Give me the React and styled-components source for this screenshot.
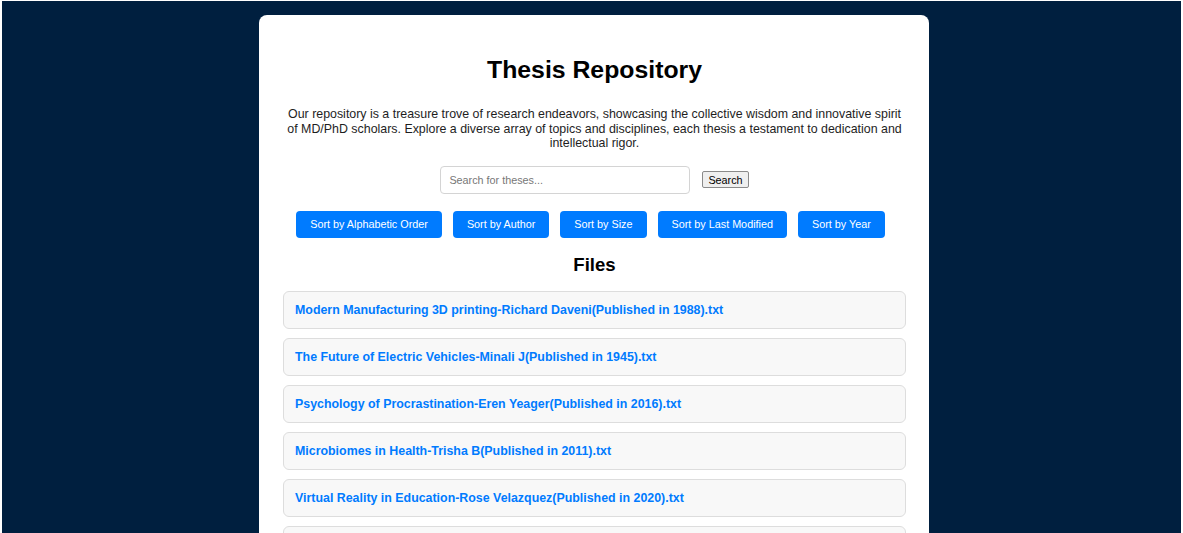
import styled, { createGlobalStyle } from "styled-components";

const GlobalStyle = createGlobalStyle`
  html, body {
    margin: 0;
    padding: 0;
    background: #ffffff;
    font-family: "Liberation Sans", Arial, sans-serif;
  }
  * { box-sizing: border-box; }
`;

const files = [
  "Modern Manufacturing 3D printing-Richard Daveni(Published in 1988).txt",
  "The Future of Electric Vehicles-Minali J(Published in 1945).txt",
  "Psychology of Procrastination-Eren Yeager(Published in 2016).txt",
  "Microbiomes in Health-Trisha B(Published in 2011).txt",
  "Virtual Reality in Education-Rose Velazquez(Published in 2020).txt",
  "Quantum Computing Basics-Alan K(Published in 2018).txt",
];

const sorts = [
  "Sort by Alphabetic Order",
  "Sort by Author",
  "Sort by Size",
  "Sort by Last Modified",
  "Sort by Year",
];

export default function App() {
  return (
    <>
      <GlobalStyle />
      <Page>
        <Card>
          <Title>Thesis Repository</Title>
          <Intro>
            Our repository is a treasure trove of research endeavors, showcasing
            the collective wisdom and innovative spirit of MD/PhD scholars.
            Explore a diverse array of topics and disciplines, each thesis a
            testament to dedication and intellectual rigor.
          </Intro>

          <SearchRow>
            <SearchInput type="text" placeholder="Search for theses..." />
            <SearchButton>Search</SearchButton>
          </SearchRow>

          <SortRow>
            {sorts.map((s) => (
              <SortButton key={s}>{s}</SortButton>
            ))}
          </SortRow>

          <SectionTitle>Files</SectionTitle>

          <FileList>
            {files.map((f) => (
              <FileItem key={f}>
                <FileLink href="#">{f}</FileLink>
              </FileItem>
            ))}
          </FileList>
        </Card>
      </Page>
    </>
  );
}

const Page = styled.div`
  margin: 1px 2px 0 2px;
  min-height: 532px;
  background: #001f3f;
  padding: 14px 0 40px 5px;
  overflow: hidden;
`;

const Card = styled.div`
  width: 670px;
  margin: 0 auto;
  background: #ffffff;
  border-radius: 8px;
  padding: 40px 23px 30px 24px;
`;

const Title = styled.h1`
  margin: 0;
  font-size: 24.8px;
  line-height: 29px;
  font-weight: bold;
  text-align: center;
  color: #000;
`;

const Intro = styled.p`
  margin: 23px 0 0;
  font-size: 12.4px;
  line-height: 14.5px;
  text-align: center;
  color: #1e1e1e;
`;

const SearchRow = styled.div`
  display: flex;
  justify-content: center;
  align-items: center;
  gap: 12px;
  margin-top: 15px;
`;

const SearchInput = styled.input`
  width: 250px;
  height: 28px;
  padding: 0 8px;
  border: 1px solid #d4d4d4;
  border-radius: 4px;
  font-family: inherit;
  font-size: 10.8px;
  outline: none;

  &::placeholder {
    color: #777;
  }
`;

const SearchButton = styled.button`
  height: 17px;
  padding: 0 5px;
  border: 1px solid #8a8a8a;
  border-radius: 2px;
  background: #efefef;
  color: #000;
  font-family: inherit;
  font-size: 10.8px;
  line-height: 14px;
`;

const SortRow = styled.div`
  display: flex;
  justify-content: center;
  gap: 11px;
  margin: 17px 8px 0 0;
`;

const SortButton = styled.button`
  height: 27px;
  padding: 0 14px;
  border: none;
  border-radius: 4px;
  background: #007bff;
  color: #ffffff;
  font-family: inherit;
  font-size: 10.8px;
  cursor: pointer;
`;

const SectionTitle = styled.h2`
  margin: 16px 0 0;
  font-size: 18.6px;
  line-height: 21px;
  font-weight: bold;
  text-align: center;
  color: #000;
`;

const FileList = styled.ul`
  list-style: none;
  margin: 16px 0 0;
  padding: 0;
  display: flex;
  flex-direction: column;
  gap: 9px;
`;

const FileItem = styled.li`
  height: 38px;
  display: flex;
  align-items: center;
  padding: 0 11px;
  background: #f8f8f8;
  border: 1px solid #dddddd;
  border-radius: 6px;
`;

const FileLink = styled.a`
  color: #007bff;
  font-size: 12.4px;
  font-weight: bold;
  text-decoration: none;
`;
